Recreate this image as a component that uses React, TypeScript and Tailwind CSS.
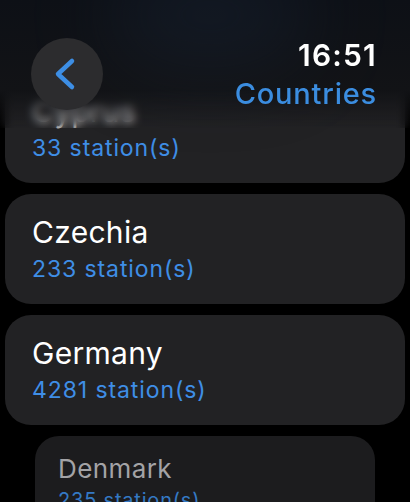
import { useState } from 'react';

interface Country {
  name: string;
  stations: number;
}

const countries: Country[] = [
  { name: 'Cyprus', stations: 33 },
  { name: 'Czechia', stations: 233 },
  { name: 'Germany', stations: 4281 },
];

function CountryRow({ country }: { country: Country }) {
  return (
    <div className="h-[110px] rounded-[26px] bg-[#222224] pl-[27px] pt-[19px]">
      <div className="text-[30px] leading-[38px] text-white tracking-[0.3px]">{country.name}</div>
      <div className="mt-[3px] text-[23px] leading-[30px] text-[#3f8ee6] tracking-[0.9px]">
        {country.stations} station(s)
      </div>
    </div>
  );
}

export default function App() {
  const [selected] = useState('Countries');

  return (
    <div
      className="relative w-[410px] h-[502px] overflow-hidden bg-black"
      style={{ fontFamily: 'Inter, "Noto Sans", sans-serif' }}
    >
      <div className="flex flex-col gap-[11px] px-[5px] pt-[73px]">
        {countries.map((c) => (
          <CountryRow key={c.name} country={c} />
        ))}
        <div className="mx-[30px] h-[110px] rounded-[24px] bg-[#1c1c1e] pl-[23px] pt-[17px]">
          <div className="text-[26px] leading-[32px] text-[#a3a3a6] tracking-[0.4px]">Denmark</div>
          <div className="mt-[2px] text-[20px] leading-[26px] text-[#3479c4] tracking-[0.8px]">235 station(s)</div>
        </div>
      </div>

      {/* header over the list */}
      <div
        className="absolute inset-x-0 top-0 h-[128px] backdrop-blur-[4px]"
        style={{
          background:
            'linear-gradient(to bottom, rgba(13,16,22,1) 0%, rgba(18,19,22,1) 70%, rgba(18,19,22,0) 100%)',
        }}
      >
        <div className="absolute left-[110px] top-[-40px] h-[110px] w-[200px] rounded-full bg-[#1a2638] opacity-40 blur-[40px]" />
        <div className="relative flex justify-between pl-[31px] pr-[33px] pt-[38px]">
          <button className="flex h-[72px] w-[72px] items-center justify-center rounded-full bg-[#2c2c2e]">
            <svg width="72" height="72" viewBox="0 0 72 72">
              <polyline
                points="41,23 27,36 41,49"
                fill="none"
                stroke="#3d8ee4"
                strokeWidth="4.5"
                strokeLinecap="round"
                strokeLinejoin="round"
              />
            </svg>
          </button>
          <div className="flex flex-col items-end">
            <div className="text-[30px] leading-[34px] font-semibold text-white tracking-[1.2px]">16:51</div>
            <div className="mt-[2px] text-[29px] leading-[40px] font-medium text-[#3b8de0] tracking-[0.8px]">{selected}</div>
          </div>
        </div>
      </div>
    </div>
  );
}
